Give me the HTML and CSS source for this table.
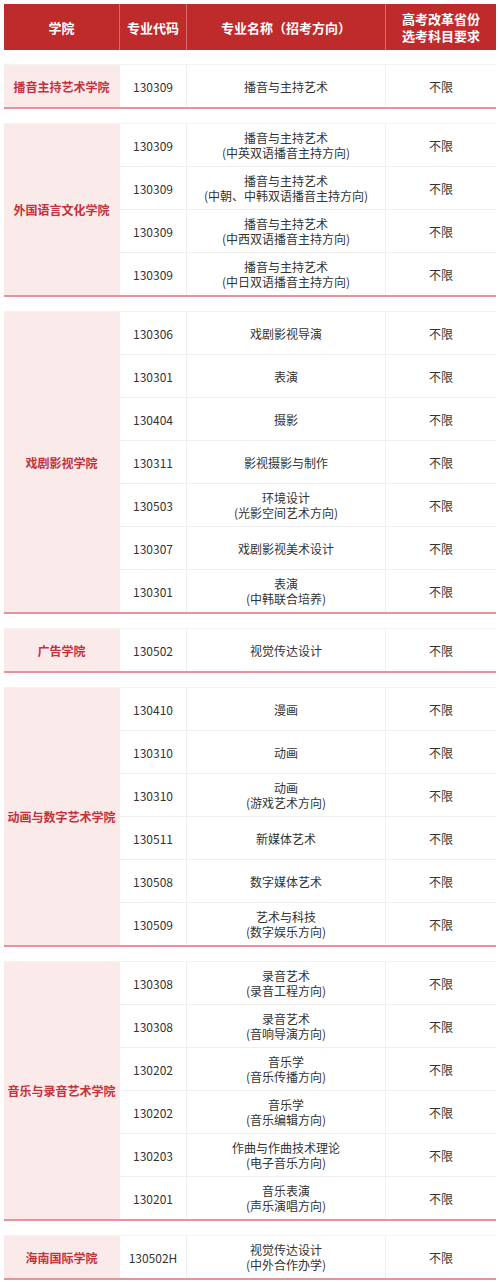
FILE: index.html
```html
<!DOCTYPE html>
<html lang="zh">
<head>
<meta charset="utf-8">
<link rel="stylesheet" href="styles.css">
</head>
<body>
<div class="page">
  <div class="head">
    <div class="hc">学院</div>
    <div class="hc">专业代码</div>
    <div class="hc">专业名称（招考方向）</div>
    <div class="hc"><span class="hl">高考改革省份</span><span class="hl">选考科目要求</span></div>
  </div>

  <div class="group" style="--rows:1">
    <div class="college">播音主持艺术学院</div>
    <div class="c">130309</div><div class="c">播音与主持艺术</div><div class="c">不限</div>
  </div>

  <div class="group" style="--rows:4">
    <div class="college">外国语言文化学院</div>
    <div class="c">130309</div><div class="c">播音与主持艺术<br>(中英双语播音主持方向)</div><div class="c">不限</div>
    <div class="c">130309</div><div class="c">播音与主持艺术<br>(中朝、中韩双语播音主持方向)</div><div class="c">不限</div>
    <div class="c">130309</div><div class="c">播音与主持艺术<br>(中西双语播音主持方向)</div><div class="c">不限</div>
    <div class="c">130309</div><div class="c">播音与主持艺术<br>(中日双语播音主持方向)</div><div class="c">不限</div>
  </div>

  <div class="group" style="--rows:7">
    <div class="college">戏剧影视学院</div>
    <div class="c">130306</div><div class="c">戏剧影视导演</div><div class="c">不限</div>
    <div class="c">130301</div><div class="c">表演</div><div class="c">不限</div>
    <div class="c">130404</div><div class="c">摄影</div><div class="c">不限</div>
    <div class="c">130311</div><div class="c">影视摄影与制作</div><div class="c">不限</div>
    <div class="c">130503</div><div class="c">环境设计<br>(光影空间艺术方向)</div><div class="c">不限</div>
    <div class="c">130307</div><div class="c">戏剧影视美术设计</div><div class="c">不限</div>
    <div class="c">130301</div><div class="c">表演<br>(中韩联合培养)</div><div class="c">不限</div>
  </div>

  <div class="group" style="--rows:1">
    <div class="college">广告学院</div>
    <div class="c">130502</div><div class="c">视觉传达设计</div><div class="c">不限</div>
  </div>

  <div class="group" style="--rows:6">
    <div class="college">动画与数字艺术学院</div>
    <div class="c">130410</div><div class="c">漫画</div><div class="c">不限</div>
    <div class="c">130310</div><div class="c">动画</div><div class="c">不限</div>
    <div class="c">130310</div><div class="c">动画<br>(游戏艺术方向)</div><div class="c">不限</div>
    <div class="c">130511</div><div class="c">新媒体艺术</div><div class="c">不限</div>
    <div class="c">130508</div><div class="c">数字媒体艺术</div><div class="c">不限</div>
    <div class="c">130509</div><div class="c">艺术与科技<br>(数字娱乐方向)</div><div class="c">不限</div>
  </div>

  <div class="group" style="--rows:6">
    <div class="college">音乐与录音艺术学院</div>
    <div class="c">130308</div><div class="c">录音艺术<br>(录音工程方向)</div><div class="c">不限</div>
    <div class="c">130308</div><div class="c">录音艺术<br>(音响导演方向)</div><div class="c">不限</div>
    <div class="c">130202</div><div class="c">音乐学<br>(音乐传播方向)</div><div class="c">不限</div>
    <div class="c">130202</div><div class="c">音乐学<br>(音乐编辑方向)</div><div class="c">不限</div>
    <div class="c">130203</div><div class="c">作曲与作曲技术理论<br>(电子音乐方向)</div><div class="c">不限</div>
    <div class="c">130201</div><div class="c">音乐表演<br>(声乐演唱方向)</div><div class="c">不限</div>
  </div>

  <div class="group" style="--rows:1">
    <div class="college">海南国际学院</div>
    <div class="c">130502H</div><div class="c">视觉传达设计<br>(中外合作办学)</div><div class="c">不限</div>
  </div>
</div>
</body>
</html>
```

FILE: styles.css
```css
html, body {
  margin: 0;
  padding: 0;
  background: #ffffff;
}
body {
  font-family: "Noto Sans CJK SC", "Noto Sans", sans-serif;
  color: #333333;
}
.page {
  padding: 4px 4px 0 4px;
  width: 492px;
}
.head {
  display: grid;
  grid-template-columns: 115px 67px 199px 111px;
  height: 46px;
  background: #bf2a2b;
}
.hc {
  display: flex;
  flex-direction: column;
  align-items: center;
  justify-content: center;
  text-align: center;
  color: #ffffff;
  font-weight: bold;
  font-size: 13px;
  line-height: 17px;
  border-left: 1px solid #d86a6b;
}
.hl {
  display: block;
  line-height: 17px;
}
.hc:first-child {
  border-left: none;
}
.group {
  margin-top: 14px;
  display: grid;
  grid-template-columns: 115px 67px 199px 111px;
  grid-auto-rows: 42px;
  row-gap: 1px;
  background: #efefef;
  border-bottom: 2px solid #e3959a;
  border-top: 1px solid #f3f3f3;
}
.group .college {
  grid-row: 1 / span var(--rows);
  background: #fbeaea;
  color: #c3323a;
  font-weight: bold;
  font-size: 12px;
  display: flex;
  align-items: center;
  justify-content: center;
  text-align: center;
}
.c {
  background: #ffffff;
  display: flex;
  align-items: center;
  justify-content: center;
  text-align: center;
  font-size: 12px;
  line-height: 15px;
  border-left: 1px solid #efefef;
}
```
